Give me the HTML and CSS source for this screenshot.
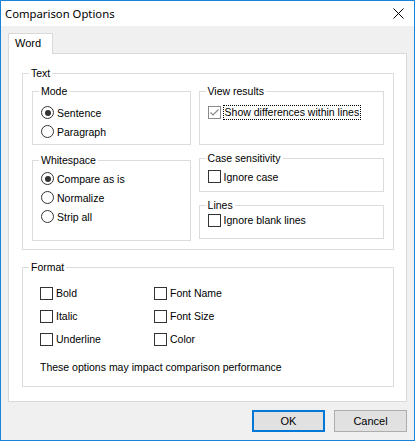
FILE: index.html
```html
<!DOCTYPE html>
<html>
<head>
<meta charset="utf-8">
<link rel="stylesheet" href="styles.css">
</head>
<body>
<div class="window">
  <div class="titlebar">
    <span class="title">Comparison Options</span>
    <svg class="close" width="11" height="11" viewBox="0 0 11 11"><path d="M0.5 0.5 L10.5 10.5 M10.5 0.5 L0.5 10.5" stroke="#000" stroke-width="1" fill="none"/></svg>
  </div>
  <div class="content">
    <div class="tabs"><div class="tab">Word</div></div>
    <div class="panel">
      <fieldset class="group text-group">
        <legend>Text</legend>
        <div class="cols">
          <div class="col col-left">
            <fieldset class="group mode">
              <legend>Mode</legend>
              <div class="row"><span class="radio checked"></span><span>Sentence</span></div>
              <div class="row"><span class="radio"></span><span>Paragraph</span></div>
            </fieldset>
            <fieldset class="group whitespace">
              <legend>Whitespace</legend>
              <div class="row"><span class="radio checked"></span><span>Compare as is</span></div>
              <div class="row"><span class="radio"></span><span>Normalize</span></div>
              <div class="row"><span class="radio"></span><span>Strip all</span></div>
            </fieldset>
          </div>
          <div class="col col-right">
            <fieldset class="group view">
              <legend>View results</legend>
              <div class="row"><span class="check checked"><svg width="11" height="11" viewBox="0 0 11 11"><path d="M1.5 5.5 L4 8 L9.5 2.5" stroke="#8a8a8a" stroke-width="1.2" fill="none"/></svg></span><span class="focus">Show differences within lines</span></div>
            </fieldset>
            <fieldset class="group case">
              <legend>Case sensitivity</legend>
              <div class="row"><span class="check"></span><span>Ignore case</span></div>
            </fieldset>
            <fieldset class="group lines">
              <legend>Lines</legend>
              <div class="row"><span class="check"></span><span>Ignore blank lines</span></div>
            </fieldset>
          </div>
        </div>
      </fieldset>
      <fieldset class="group format">
        <legend>Format</legend>
        <div class="fgrid">
          <div class="row"><span class="check"></span><span>Bold</span></div>
          <div class="row"><span class="check"></span><span>Font Name</span></div>
          <div class="row"><span class="check"></span><span>Italic</span></div>
          <div class="row"><span class="check"></span><span>Font Size</span></div>
          <div class="row"><span class="check"></span><span>Underline</span></div>
          <div class="row"><span class="check"></span><span>Color</span></div>
        </div>
        <div class="note">These options may impact comparison performance</div>
      </fieldset>
    </div>
    <div class="buttons">
      <button class="btn default">OK</button>
      <button class="btn">Cancel</button>
    </div>
  </div>
</div>
</body>
</html>
```
FILE: styles.css
```css
html, body {
  margin: 0;
  padding: 0;
  background: #f0f0f0;
}
.window {
  width: 415px;
  height: 441px;
  box-sizing: border-box;
  border: 1px solid #1883d7;
  background: #f0f0f0;
  font-family: "Liberation Sans", Arial, sans-serif;
  font-size: 10.5px;
  color: #000;
  display: flex;
  flex-direction: column;
}
.titlebar {
  height: 25px;
  background: #fff;
  display: flex;
  align-items: center;
  justify-content: space-between;
  padding: 0 10px 0 4px;
  flex: none;
}
.title {
  font-family: "Noto Sans", "Open Sans", sans-serif;
  font-size: 11.3px;
  line-height: 16px;
}
.close {
  display: block;
}
.content {
  padding: 7px 7px 0 7px;
}
.tabs {
  display: flex;
  height: 20px;
}
.tab {
  width: 45px;
  box-sizing: border-box;
  height: 21px;
  border: 1px solid #d9d9d9;
  border-bottom: none;
  background: #fff;
  padding: 2px 0 0 6px;
  line-height: 14px;
  font-size: 11px;
  position: relative;
  z-index: 1;
}
.panel {
  background: #fff;
  border: 1px solid #d9d9d9;
  padding: 13px 12px 14px 13px;
}
fieldset.group {
  margin: 0;
  padding: 0;
  border: 1px solid #dcdcdc;
  min-width: 0;
}
fieldset.group > legend {
  margin-left: 6px;
  padding: 0 2px;
  line-height: 13px;
  height: 13px;
}
.text-group {
  padding: 5px 9px 8px 9px !important;
}
.text-group > legend { margin-left: -3px !important; }
.cols {
  display: flex;
  gap: 8px;
}
.col {
  display: flex;
  flex-direction: column;
}
.col-left { width: 159px; gap: 9px; }
.col-right { width: 186px; gap: 7px; }
.row {
  display: flex;
  align-items: center;
  height: 19px;
  gap: 3px;
}
.mode { padding: 5px 0 3px 8px !important; }
.whitespace { padding: 2px 0 14px 8px !important; }
.view { padding: 5px 0 22px 8px !important; }
.case { padding: 2px 0 5px 8px !important; }
.lines { padding: 0 0 10px 8px !important; }
.mode > legend, .whitespace > legend, .view > legend, .case > legend, .lines > legend { margin-left: -2px !important; }
.lines .row { height: 16px; }
.radio {
  width: 13px;
  height: 13px;
  box-sizing: border-box;
  border: 1px solid #333;
  border-radius: 50%;
  background: #fff;
  position: relative;
  flex: none;
}
.radio.checked::after {
  content: "";
  position: absolute;
  left: 2.5px;
  top: 2.5px;
  width: 6px;
  height: 6px;
  border-radius: 50%;
  background: #333;
}
.check {
  width: 13px;
  height: 13px;
  box-sizing: border-box;
  border: 1px solid #333;
  background: #fff;
  flex: none;
  display: flex;
  align-items: center;
  justify-content: center;
}
.check.checked {
  border-color: #8a8a8a;
}
.check svg { display: block; }
.focus {
  outline: 1px dotted #000;
  outline-offset: 0;
  padding: 0 1px;
  line-height: 13px;
}
.format {
  margin-top: 11px !important;
  padding: 9px 0 12px 17px !important;
}
.format > legend { margin-left: -11px !important; }
.fgrid {
  display: grid;
  grid-template-columns: 114px 114px;
  row-gap: 3px;
}
.fgrid .row { height: 20px; }
.note {
  margin-top: 12px;
  line-height: 13px;
}
.buttons {
  display: flex;
  justify-content: flex-end;
  gap: 9px;
  padding-top: 8px;
}
.btn {
  width: 73px;
  height: 22px;
  box-sizing: border-box;
  background: #e1e1e1;
  border: 1px solid #adadad;
  font-family: "Liberation Sans", Arial, sans-serif;
  font-size: 11px;
  color: #000;
  padding: 0;
  margin: 0;
}
.btn.default {
  border: 2px solid #0078d7;
}
```
